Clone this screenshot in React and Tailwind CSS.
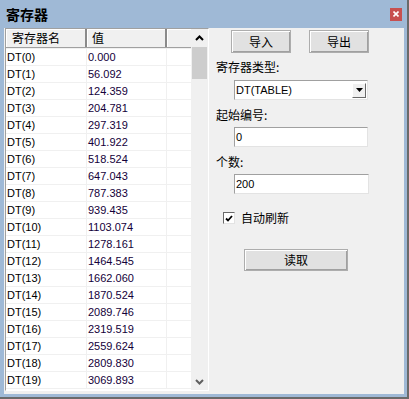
import React from "react";

const values = [
  "0.000", "56.092", "124.359", "204.781", "297.319", "401.922", "518.524",
  "647.043", "787.383", "939.435", "1103.074", "1278.161", "1464.545",
  "1662.060", "1870.524", "2089.746", "2319.519", "2559.624", "2809.830",
  "3069.893",
];

const cjk = { fontFamily: '"Noto Sans CJK SC", "Liberation Sans", sans-serif' };
const lat = { fontFamily: '"Liberation Sans", "Noto Sans CJK SC", sans-serif' };

function Btn({ children, className }) {
  return (
    <div
      className={
        "flex items-center justify-center bg-[#e1e1e1] border border-[#adadad] text-[12px] text-black shadow-[inset_1px_1px_0_#ffffff,inset_-1px_-1px_0_#a0a0a0] " +
        className
      }
      style={cjk}
    >
      {children}
    </div>
  );
}

function Chevron({ up }) {
  return (
    <svg width="9" height="6" viewBox="0 0 9 6">
      <path
        d={up ? "M1 5 L4.5 1.5 L8 5" : "M1 1 L4.5 4.5 L8 1"}
        fill="none"
        stroke={up ? "#000" : "#606060"}
        strokeWidth="2"
      />
    </svg>
  );
}

export default function App() {
  return (
    <div className="w-[409px] h-[399px] bg-[#9fb9d6] border-r-2 border-b-2 border-[#6a6a6a] flex flex-col select-none">
      {/* title bar */}
      <div className="h-[28px] flex items-center justify-between pl-[6px] pr-[5px] shrink-0">
        <span className="text-[14px] font-bold text-black leading-none" style={cjk}>
          寄存器
        </span>
        <div className="w-[12px] h-[13px] bg-[#c75050] flex items-center justify-center">
          <svg width="6" height="6" viewBox="0 0 6 6">
            <path d="M0.5 0.5 L5.5 5.5 M5.5 0.5 L0.5 5.5" stroke="#fff" strokeWidth="1.6" />
          </svg>
        </div>
      </div>

      {/* body */}
      <div className="ml-[4px] mr-[3px] mb-[3px] flex-1 bg-[#f0f0f0] flex">
        {/* list */}
        <div className="ml-[1px] w-[204px] h-[363px] border border-t-[#a0a0a0] border-l-[#a0a0a0] border-r-white border-b-white bg-white flex overflow-hidden">
          <div className="w-[185px] flex flex-col">
            {/* header */}
            <div className="h-[19px] flex bg-[#f0f0f0] border-b border-[#a0a0a0] text-[12px] text-black shrink-0" style={cjk}>
              <div className="w-[81px] flex items-center pl-[6px] border-r-2 border-r-[#8a8a8a] shadow-[inset_1px_1px_0_#ffffff]">寄存器名</div>
              <div className="w-[80px] flex items-center pl-[5px] border-r-2 border-r-[#8a8a8a] shadow-[inset_1px_1px_0_#ffffff]">值</div>
              <div className="w-[24px] shadow-[inset_1px_1px_0_#ffffff]"></div>
            </div>
            {/* rows */}
            <div className="flex flex-col border-b border-[#f0f0f0]">
              {values.map((v, i) => (
                <div key={i} className="h-[17px] flex border-t border-[#f0f0f0] text-[11px] text-black" style={lat}>
                  <div className="w-[81px] border-r border-[#f0f0f0] flex items-center pl-[1px]">DT({i})</div>
                  <div className="w-[80px] border-r border-[#f0f0f0] flex items-center pl-[1px] text-[#14003a]">{v}</div>
                  <div className="w-[24px]"></div>
                </div>
              ))}
            </div>
          </div>
          {/* scrollbar */}
          <div className="w-[17px] bg-[#f0f0f0] flex flex-col items-center">
            <div className="h-[18px] w-full flex items-center justify-center">
              <Chevron up />
            </div>
            <div className="w-[15px] h-[32px] bg-[#cdcdcd]"></div>
            <div className="flex-1"></div>
            <div className="h-[17px] w-full flex items-center justify-center">
              <Chevron />
            </div>
          </div>
        </div>

        {/* right panel */}
        <div className="flex-1 flex flex-col text-[12px] text-black" style={cjk}>
          <div className="mt-[2px] ml-[22px] flex gap-[18px]">
            <Btn className="w-[60px] h-[23px]">导入</Btn>
            <Btn className="w-[60px] h-[23px]">导出</Btn>
          </div>
          <div className="mt-[6px] ml-[7px] h-[16px] leading-[16px]">寄存器类型:</div>
          <div className="mt-[5px] ml-[25px] w-[134px] h-[20px] bg-white border border-t-[#a0a0a0] border-l-[#a0a0a0] border-r-[#e3e3e3] border-b-[#e3e3e3] flex items-center pl-[1px] pr-[1px]">
            <span className="flex-1 text-[11px]" style={lat}>DT(TABLE)</span>
            <div className="w-[14px] h-[15px] bg-[#f0f0f0] border border-t-white border-l-white border-r-[#696969] border-b-[#696969] flex items-center justify-center">
              <svg width="7" height="4" viewBox="0 0 7 4">
                <path d="M0 0 H7 L3.5 4 Z" fill="#000" />
              </svg>
            </div>
          </div>
          <div className="mt-[7px] ml-[7px] h-[16px] leading-[16px]">起始编号:</div>
          <div className="mt-[4px] ml-[25px] w-[134px] h-[20px] bg-white border border-t-[#a0a0a0] border-l-[#a0a0a0] border-r-[#e3e3e3] border-b-[#e3e3e3] flex items-center pl-[1px] text-[11px]" style={lat}>
            0
          </div>
          <div className="mt-[7px] ml-[7px] h-[16px] leading-[16px]">个数:</div>
          <div className="mt-[4px] ml-[25px] w-[135px] h-[20px] bg-white border border-t-[#a0a0a0] border-l-[#a0a0a0] border-r-[#e3e3e3] border-b-[#e3e3e3] flex items-center pl-[1px] text-[11px]" style={lat}>
            200
          </div>
          <div className="mt-[16px] ml-[14px] h-[16px] flex items-center gap-[6px]">
            <div className="w-[12px] h-[12px] bg-white border border-t-[#696969] border-l-[#696969] border-r-[#e3e3e3] border-b-[#e3e3e3] flex items-center justify-center">
              <svg width="8" height="7" viewBox="0 0 8 7">
                <path d="M1 3.5 L3 5.5 L7 1" fill="none" stroke="#000" strokeWidth="1.8" />
              </svg>
            </div>
            <span className="leading-[16px]">自动刷新</span>
          </div>
          <Btn className="mt-[23px] ml-[35px] w-[104px] h-[22px]">读取</Btn>
        </div>
      </div>
    </div>
  );
}
